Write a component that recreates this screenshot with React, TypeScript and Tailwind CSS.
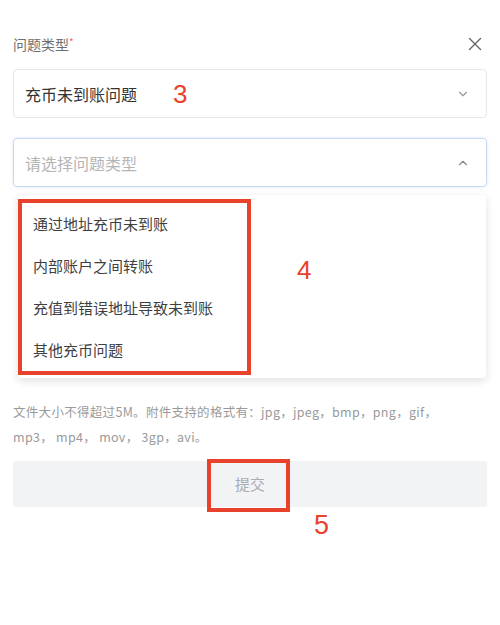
import { X, ChevronDown, ChevronUp } from 'lucide-react';

const options = ['通过地址充币未到账', '内部账户之间转账', '充值到错误地址导致未到账', '其他充币问题'];

export default function App() {
  return (
    <div
      className="w-[500px] h-[625px] bg-white px-[13px] pt-[30px] relative overflow-hidden"
      style={{ fontFamily: '"Noto Sans CJK SC", "Noto Sans", sans-serif' }}
    >
      {/* Header */}
      <div className="flex items-center justify-between h-[28px]">
        <div className="text-[14px] text-[#707070]">
          问题类型<span className="text-[#f06a6a] align-top text-[10px]">*</span>
        </div>
        <X className="w-[22px] h-[22px] text-[#666] mr-[1px]" strokeWidth={1.5} />
      </div>

      {/* Selected value */}
      <div className="mt-[11px] h-[49px] border border-[#e6e8ec] rounded-[4px] flex items-center justify-between pl-[11px] pr-[16px]">
        <div className="flex items-center">
          <span className="text-[16px] text-[#333]">充币未到账问题</span>
          <span className="ml-[36px] text-[26px] text-[#e8412c] leading-none" style={{ fontFamily: '"Liberation Sans", sans-serif' }}>3</span>
        </div>
        <ChevronDown className="w-[14px] h-[14px] text-[#999]" strokeWidth={2} />
      </div>

      {/* Open select */}
      <div className="mt-[20px] h-[49px] border border-[#c8d9f3] rounded-[4px] flex items-center justify-between pl-[11px] pr-[16px] shadow-[0_0_3px_rgba(120,160,220,0.25)]">
        <span className="text-[16px] text-[#b5b5b5]">请选择问题类型</span>
        <ChevronUp className="w-[14px] h-[14px] text-[#888]" strokeWidth={2} />
      </div>

      {/* Dropdown */}
      <div className="mt-[8px] ml-[5px] mr-[1px] h-[183px] rounded-[4px] bg-white shadow-[0_3px_10px_rgba(0,0,0,0.12)] flex items-start pt-[4px]">
        <div className="w-[233px] h-[176px] border-[4px] border-[#e8412c] flex flex-col pl-[11px]">
          {options.map((o) => (
            <div key={o} className="h-[42px] flex items-center text-[15px] text-[#3f3f3f]">{o}</div>
          ))}
        </div>
        <span className="ml-[46px] mt-[58px] text-[26px] text-[#e8412c] leading-none" style={{ fontFamily: '"Liberation Sans", sans-serif' }}>4</span>
      </div>

      {/* Hint */}
      <div className="mt-[21px] text-[12.5px] leading-[25px] tracking-[0.3px] text-[#9a9a9a]">
        文件大小不得超过5M。附件支持的格式有：jpg，jpeg，bmp，png，gif，
        <br />
        mp3， mp4， mov， 3gp，avi。
      </div>

      {/* Submit */}
      <div className="mt-[12px] h-[46px] bg-[#f2f3f5] rounded-[3px] flex items-center justify-center relative">
        <span className="text-[15px] text-[#a8abb3]">提交</span>
        <div className="absolute left-[194px] top-[-2px] w-[83px] h-[53px] border-[4px] border-[#e8412c]" />
      </div>
      <div className="ml-[301px] mt-[5px] text-[27px] text-[#e8412c] leading-none" style={{ fontFamily: '"Liberation Sans", sans-serif' }}>5</div>
    </div>
  );
}
